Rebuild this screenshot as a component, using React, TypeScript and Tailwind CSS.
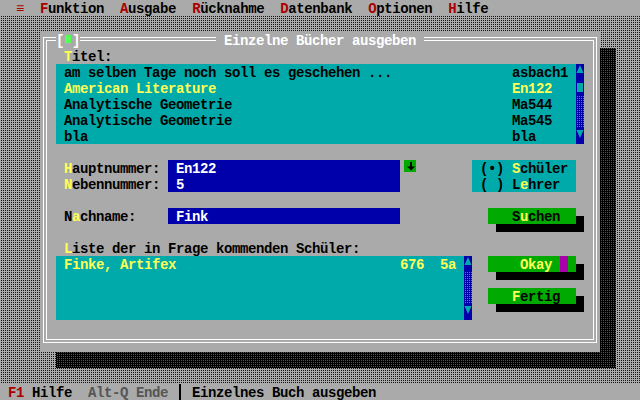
const Y = "text-[#ffff55]";
const R = "text-[#aa0000]";

function Up() {
  return (
    <svg width="8" height="16" className="block">
      <polygon points="4,1 7.5,9 0.5,9" fill="#00aaaa" />
    </svg>
  );
}

function Down() {
  return (
    <svg width="8" height="16" className="block">
      <polygon points="0.5,2 7.5,2 4,10" fill="#00aaaa" />
    </svg>
  );
}

function Dots({ h }: { h: string }) {
  return <div className={`${h} bg-[#0000aa] bg-[image:conic-gradient(#00aaaa_25%,#0000aa_0)] bg-[length:2px_2px]`} />;
}

function Btn({ children, pad }: { children: React.ReactNode; pad: string }) {
  return (
    <div className="relative w-[88px] h-4 ml-4">
      <div className="absolute left-2 top-2 w-[88px] h-4 bg-black" />
      <div className={`relative flex h-4 bg-[#00aa00] whitespace-pre ${pad}`}>{children}</div>
    </div>
  );
}

export default function App() {
  return (
    <div className="w-[640px] h-[400px] overflow-hidden flex flex-col bg-[#aaaaaa] text-black font-['Liberation_Mono',monospace] font-bold text-[14px] tracking-[-0.4px] leading-[18px]">
      {/* menu */}
      <div className="h-4 whitespace-pre">
        {"  "}<span className={R}>≡</span>{"  "}
        <span className={R}>F</span>unktion{"  "}
        <span className={R}>A</span>usgabe{"  "}
        <span className={R}>R</span>ücknahme{"  "}
        <span className={R}>D</span>atenbank{"  "}
        <span className={R}>O</span>ptionen{"  "}
        <span className={R}>H</span>ilfe
      </div>

      {/* desktop */}
      <div className="h-[368px] pt-4 pl-10 bg-[#aaaaaa] bg-[image:conic-gradient(#0000aa_25%,#aaaaaa_0)] bg-[length:2px_2px]">
        <div className="relative w-[560px] h-[320px]">
          <div className="absolute left-4 top-4 w-[560px] h-[320px] bg-black bg-[image:conic-gradient(#555555_25%,#000000_0)] bg-[length:2px_2px]" />
          <div className="relative w-full h-full bg-[#aaaaaa]">
            <div className="absolute left-[3px] top-[5px] right-[3px] bottom-[9px] border-4 border-double border-white" />
            <div className="absolute left-4 top-0 h-4 flex bg-[#aaaaaa] text-white">
              <span className="w-2">[</span>
              <span className="w-2 h-4 flex justify-center pt-[3px]">
                <span className="w-[6px] h-2 bg-[#55ff55]" />
              </span>
              <span className="w-2">]</span>
            </div>
            <div className="absolute left-[176px] top-0 h-4 px-2 bg-[#aaaaaa] text-white whitespace-pre">
              Einzelne Bücher ausgeben
            </div>

            <div className="relative flex flex-col pt-4 pl-4 w-[544px]">
              <div className="h-4 pl-2">
                <span className={Y}>T</span>itel:
              </div>

              <div className="flex h-20">
                <div className="w-[520px] bg-[#00aaaa] pl-2 flex flex-col whitespace-pre">
                  <div className="flex h-4"><span className="w-[448px]">am selben Tage noch soll es geschehen ...</span><span>asbach1</span></div>
                  <div className={`flex h-4 ${Y}`}><span className="w-[448px]">American Literature</span><span>En122</span></div>
                  <div className="flex h-4"><span className="w-[448px]">Analytische Geometrie</span><span>Ma544</span></div>
                  <div className="flex h-4"><span className="w-[448px]">Analytische Geometrie</span><span>Ma545</span></div>
                  <div className="flex h-4"><span className="w-[448px]">bla</span><span>bla</span></div>
                </div>
                <div className="w-2 flex flex-col bg-[#0000aa]">
                  <Up />
                  <div className="h-4 pt-[3px] pl-[1px]"><div className="w-[6px] h-[9px] bg-[#00aaaa]" /></div>
                  <Dots h="h-8" />
                  <Down />
                </div>
              </div>

              <div className="h-4" />

              <div className="flex">
                <div className="w-[416px] flex flex-col">
                  <div className="flex h-4">
                    <div className="w-[112px] pl-2"><span className={Y}>H</span>auptnummer:</div>
                    <div className="w-[232px] bg-[#0000aa] text-white pl-2">En122</div>
                    <div className="ml-1 w-3 h-3 bg-[#00aa00]">
                      <svg width="12" height="12" className="block">
                        <rect x="6" y="2" width="2" height="5" fill="#000" />
                        <polygon points="3,6.5 11,6.5 7,10.5" fill="#000" />
                      </svg>
                    </div>
                  </div>
                  <div className="flex h-4">
                    <div className="w-[112px] pl-2"><span className={Y}>N</span>ebennummer:</div>
                    <div className="w-[232px] bg-[#0000aa] text-white pl-2">5</div>
                  </div>
                  <div className="h-4" />
                  <div className="flex h-4">
                    <div className="w-[112px] pl-2">N<span className={Y}>a</span>chname:</div>
                    <div className="w-[232px] bg-[#0000aa] text-white pl-2">Fink</div>
                  </div>
                </div>
                <div className="w-[104px] flex flex-col">
                  <div className="h-8 bg-[#00aaaa] pl-2 flex flex-col whitespace-pre">
                    <div className="h-4">(•) <span className={Y}>S</span>chüler</div>
                    <div className="h-4">( ) L<span className={Y}>e</span>hrer</div>
                  </div>
                  <div className="h-4" />
                  <Btn pad="pl-6">
                    S<span className={Y}>u</span>chen
                  </Btn>
                </div>
              </div>

              <div className="h-4" />

              <div className="flex">
                <div className="w-[416px] flex flex-col">
                  <div className="h-4 pl-2 whitespace-pre">
                    <span className={Y}>L</span>iste der in Frage kommenden Schüler:
                  </div>
                  <div className="flex h-16">
                    <div className="w-[408px] bg-[#00aaaa] pl-2 flex flex-col whitespace-pre">
                      <div className={`flex h-4 ${Y}`}>
                        <span className="w-[336px]">Finke, Artifex</span>
                        <span className="w-10">676</span>
                        <span>5a</span>
                      </div>
                    </div>
                    <div className="w-2 flex flex-col bg-[#0000aa]">
                      <Up />
                      <Dots h="h-8" />
                      <Down />
                    </div>
                  </div>
                </div>
                <div className="flex flex-col pt-4 gap-4">
                  <Btn pad="pl-8">
                    <span className={Y}>Okay</span>
                    <span className="ml-2 w-2 h-4 bg-[#aa00aa]" />
                  </Btn>
                  <Btn pad="pl-6">
                    <span className={Y}>F</span>ertig
                  </Btn>
                </div>
              </div>
            </div>
          </div>
        </div>
      </div>

      {/* status */}
      <div className="h-4 flex whitespace-pre">
        <span> </span>
        <span className={R}>F1</span>
        <span> Hilfe  </span>
        <span className="text-[#555555]">Alt-Q Ende</span>
        <span> </span>
        <span className="w-2 h-4 flex justify-center"><span className="w-[2px] h-4 bg-black" /></span>
        <span> Einzelnes Buch ausgeben</span>
      </div>
    </div>
  );
}
